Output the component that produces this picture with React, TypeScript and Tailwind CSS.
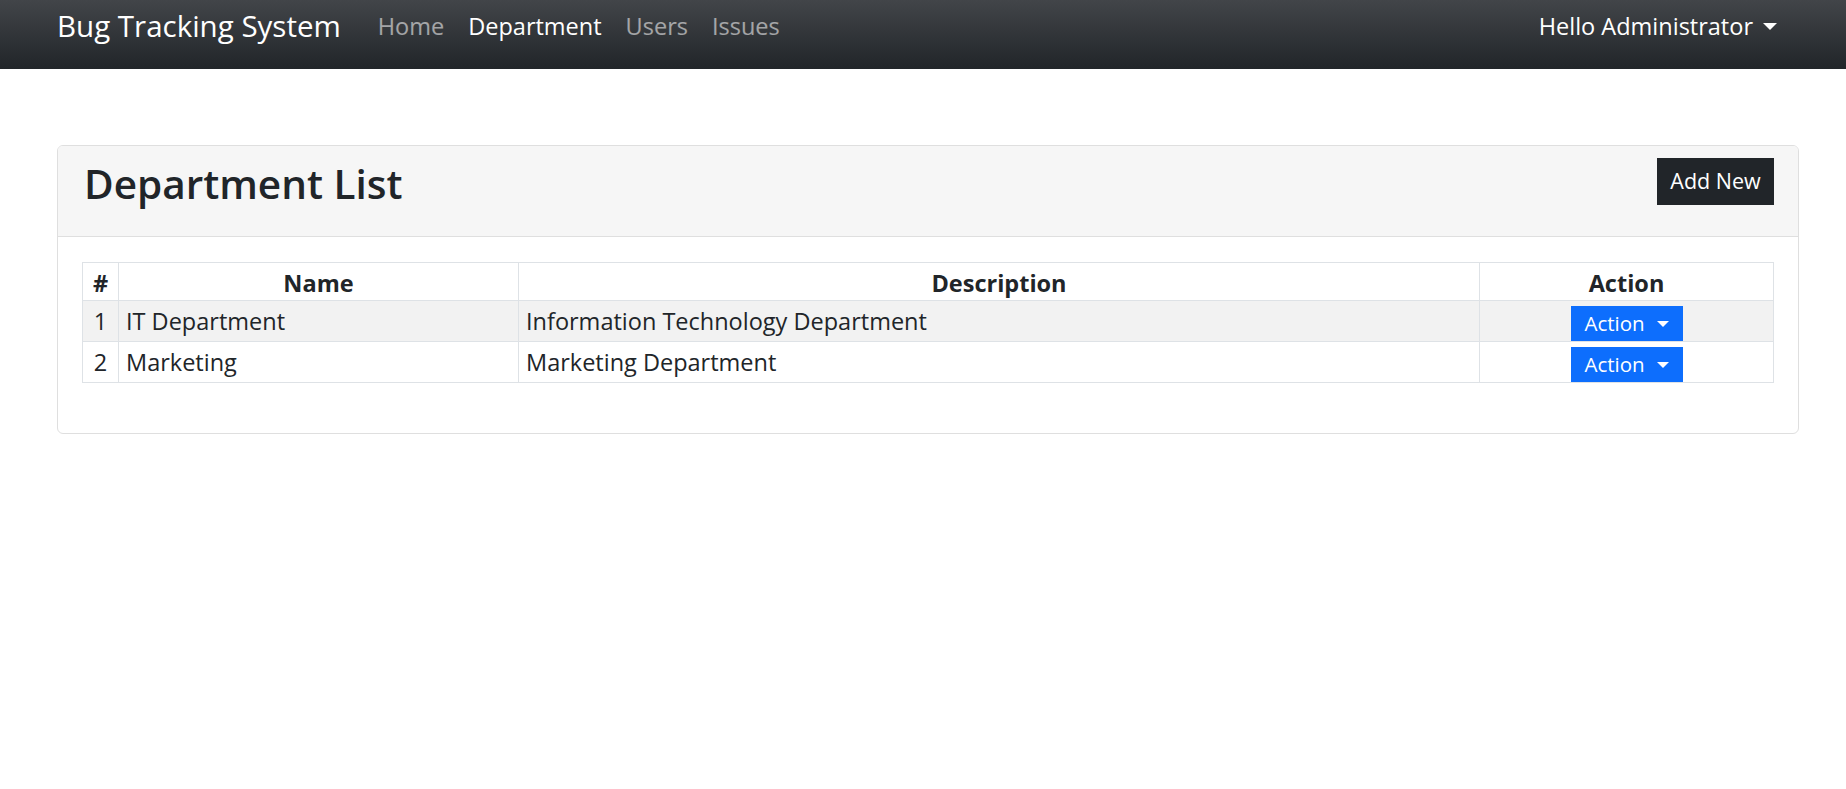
import React from "react";

const rows = [
  { id: 1, name: "IT Department", description: "Information Technology Department" },
  { id: 2, name: "Marketing", description: "Marketing Department" },
];

function Caret({ size = 7 }: { size?: number }) {
  return size === 7 ? (
    <span className="inline-block w-0 h-0 border-x-[7px] border-x-transparent border-t-[7px] border-t-white" />
  ) : (
    <span className="inline-block w-0 h-0 border-x-[6px] border-x-transparent border-t-[6px] border-t-white" />
  );
}

export default function App() {
  return (
    <div className="min-h-[789px] bg-white font-['Open_Sans',sans-serif] text-[#212529]">
      <nav className="h-[69px] bg-[linear-gradient(180deg,#424549,#212529)] pl-[57px] pr-[47px] pb-[17px] flex items-center justify-between">
        <div className="flex items-center">
          <a className="text-[29.5px] leading-[44px] text-white mr-[25px]">Bug Tracking System</a>
          <ul className="flex items-center text-[23.5px] leading-[36px]">
            <li className="px-[12px] text-white/55">Home</li>
            <li className="px-[12px] text-white">Department</li>
            <li className="px-[12px] text-white/55">Users</li>
            <li className="px-[12px] text-white/55">Issues</li>
          </ul>
        </div>
        <div className="flex items-center pr-[22px] text-[23.5px] leading-[36px] text-white">
          <span>Hello Administrator</span>
          <span className="ml-[10px] flex items-center">
            <Caret size={7} />
          </span>
        </div>
      </nav>

      <main className="pl-[57px] pr-[47px] pt-[76px]">
        <div className="border border-[#dfdfdf] rounded-[6px] overflow-hidden">
          <div className="h-[91px] bg-[#f6f6f6] border-b border-[#dfdfdf] px-[24px] pt-[12px] flex items-start justify-between">
            <h3 className="mt-[1px] ml-[2px] text-[40.5px] leading-[49px] font-semibold">Department List</h3>
            <button className="h-[47px] w-[117px] bg-[#212529] text-white text-[21.5px] flex items-center justify-center">
              Add New
            </button>
          </div>
          <div className="px-[24px] pt-[25px] pb-[50px]">
            <table className="w-full table-fixed border-separate border-spacing-0 text-[23.5px]">
              <colgroup>
                <col className="w-[37px]" />
                <col className="w-[400px]" />
                <col className="w-[961px]" />
                <col />
              </colgroup>
              <thead>
                <tr className="h-[39px]">
                  {["#", "Name", "Description", "Action"].map((h, i) => (
                    <th
                      key={h}
                      className={
                        "border-t border-b border-r border-[#dee2e6] text-center font-bold leading-[30px] pt-[3px] p-0 align-middle " +
                        (i === 0 ? "border-l" : "")
                      }
                    >
                      {h}
                    </th>
                  ))}
                </tr>
              </thead>
              <tbody>
                {rows.map((r, idx) => (
                  <tr key={r.id} className={"h-[41px] " + (idx === 0 ? "bg-[#f2f2f2]" : "bg-white")}>
                    <td className="border-l border-r border-b border-[#dee2e6] text-center p-0 leading-[32px] align-middle">
                      {r.id}
                    </td>
                    <td className="border-r border-b border-[#dee2e6] px-[7px] py-0 leading-[32px] align-middle">
                      {r.name}
                    </td>
                    <td className="border-r border-b border-[#dee2e6] px-[7px] py-0 leading-[32px] align-middle">
                      {r.description}
                    </td>
                    <td className="border-r border-b border-[#dee2e6] p-0 align-bottom">
                      <button className="mx-auto flex items-center h-[35px] w-[112px] bg-[#0d6efd] text-white text-[20.5px] pl-[14px]">
                        <span>Action</span>
                        <span className="ml-[12px] flex items-center">
                          <Caret size={6} />
                        </span>
                      </button>
                    </td>
                  </tr>
                ))}
              </tbody>
            </table>
          </div>
        </div>
      </main>
    </div>
  );
}
